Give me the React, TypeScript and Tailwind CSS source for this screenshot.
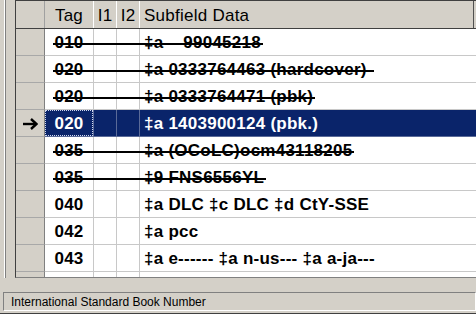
import React from "react";

type Row = { tag: string; data: string; struck?: boolean; selected?: boolean };

const rows: Row[] = [
  { tag: "010", data: "‡a    99045218", struck: true },
  { tag: "020", data: "‡a 0333764463 (hardcover) ", struck: true },
  { tag: "020", data: "‡a 0333764471 (pbk)", struck: true },
  { tag: "020", data: "‡a 1403900124 (pbk.)", selected: true },
  { tag: "035", data: "‡a (OCoLC)ocm43118205", struck: true },
  { tag: "035", data: "‡9 FNS6556YL", struck: true },
  { tag: "040", data: "‡a DLC ‡c DLC ‡d CtY-SSE" },
  { tag: "042", data: "‡a pcc" },
  { tag: "043", data: "‡a e------ ‡a n-us--- ‡a a-ja---" },
];

function Arrow() {
  return (
    <svg width="16" height="12" viewBox="0 0 16 12" className="block">
      <path d="M1 6 H14" stroke="#000" strokeWidth="2.4" fill="none" />
      <path d="M9 1 L14.4 6 L9 11" stroke="#000" strokeWidth="2.4" fill="none" strokeLinejoin="miter" />
    </svg>
  );
}

function DataRow({ row }: { row: Row }) {
  const sel = row.selected;
  const cellBg = sel ? "bg-[#0a246a] text-white" : "bg-white text-black";
  const line = sel ? "border-[#5a6a98]" : "border-[#c8c8c8]";
  return (
    <div className="flex h-[27px] shrink-0 font-bold text-[17px] tracking-[0.25px]">
      <div className="w-[29px] shrink-0 bg-[#d4d0c8] border-r border-b border-r-[#808080] border-b-[#a8a8a8] flex items-center justify-center pt-[1px]">
        {sel ? <Arrow /> : null}
      </div>
      <div className={`w-[49px] shrink-0 border-r border-b ${line} ${cellBg} relative flex items-center justify-center pt-[2px]`}>
        <span className="leading-[20px]">{row.tag}</span>
        {sel ? <div className="absolute inset-0 border border-dotted border-[#d0d8f0]" /> : null}
      </div>
      <div className={`w-[23px] shrink-0 border-r border-b ${line} ${cellBg}`} />
      <div className={`w-[23px] shrink-0 border-r border-b ${line} ${cellBg}`} />
      <div className={`flex-1 border-b ${line} ${cellBg} flex items-center pl-[4px] pt-[2px]`}>
        <span className="relative whitespace-pre leading-[20px]">
          {row.data}
          {row.struck ? (
            <span className="absolute left-[-91px] right-[-2px] top-[10px] h-[1.5px] bg-black" />
          ) : null}
        </span>
      </div>
    </div>
  );
}

export default function App() {
  return (
    <div className="w-[476px] h-[314px] bg-[#d4d0c8] flex flex-col overflow-hidden font-['Liberation_Sans',Arial,sans-serif] text-black">
      <div className="flex h-[278px] shrink-0">
        <div className="w-[15px] shrink-0 flex">
          <div className="w-[4px]" />
          <div className="w-px bg-white" />
          <div className="w-px bg-[#808080]" />
        </div>
        <div className="flex-1 flex flex-col border-l border-l-[#404040] border-b border-b-[#808080] bg-white">
          <div className="flex h-[29px] shrink-0 border-t border-b border-[#404040] bg-[#d4d0c8] text-[17px] tracking-[0.25px]">
            <div className="w-[29px] shrink-0 border-r border-[#a0a0a0]" />
            <div className="w-[49px] shrink-0 border-r border-white flex items-center justify-center pt-[3px]">Tag</div>
            <div className="w-[23px] shrink-0 border-r border-white flex items-center justify-center pt-[3px]">I1</div>
            <div className="w-[23px] shrink-0 border-r border-white flex items-center justify-center pt-[3px]">I2</div>
            <div className="flex-1 border-r border-[#505050] flex items-center pl-[4px] pt-[3px]">Subfield Data</div>
            <div className="w-[2px] shrink-0" />
          </div>
          {rows.map((r, i) => (
            <DataRow key={i} row={r} />
          ))}
          <div className="flex flex-1">
            <div className="w-[29px] shrink-0 bg-[#d4d0c8] border-r border-[#808080]" />
            <div className="w-[49px] shrink-0 border-r border-[#c8c8c8]" />
            <div className="w-[23px] shrink-0 border-r border-[#c8c8c8]" />
            <div className="w-[23px] shrink-0 border-r border-[#c8c8c8]" />
            <div className="flex-1" />
          </div>
        </div>
      </div>
      <div className="h-[14px] shrink-0" />
      <div className="h-[19px] shrink-0 ml-[3px] border-t border-l border-[#808080] border-b-white border-b border-r border-r-white flex items-center pl-[7px] text-[12px]">
        International Standard Book Number
      </div>
      <div className="h-[2px] shrink-0" />
      <div className="h-px shrink-0 bg-[#404040]" />
    </div>
  );
}
